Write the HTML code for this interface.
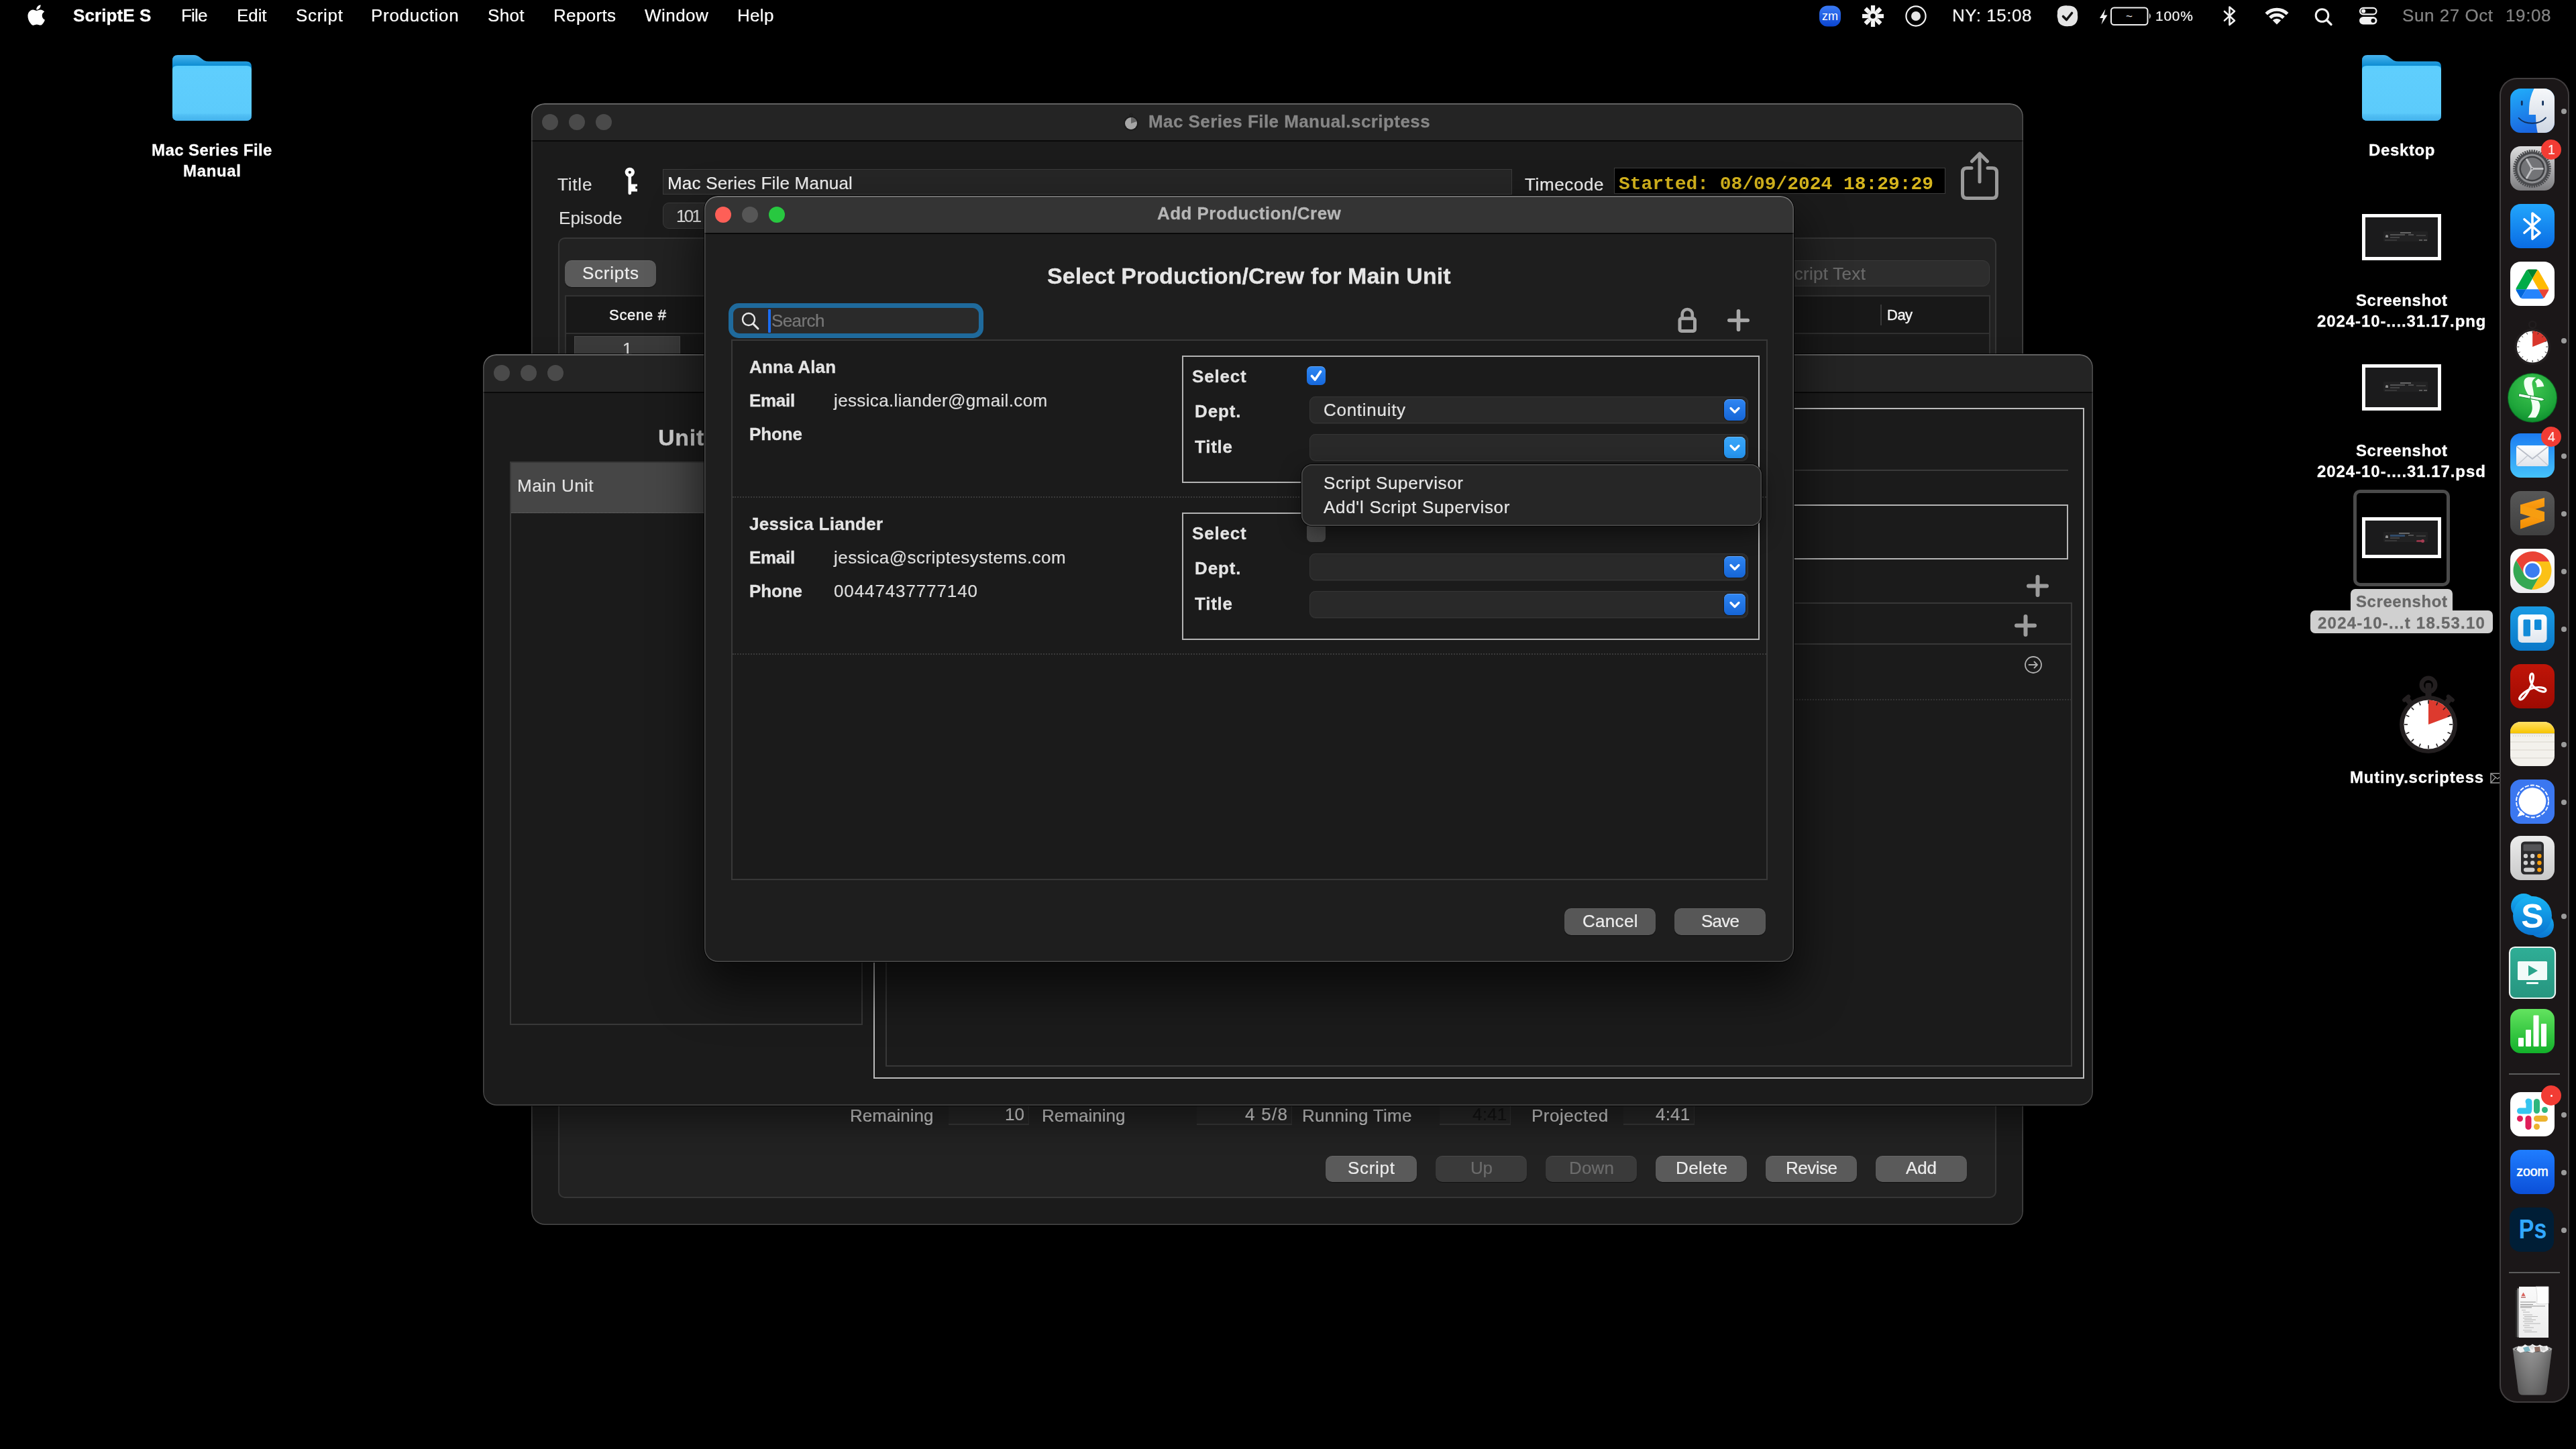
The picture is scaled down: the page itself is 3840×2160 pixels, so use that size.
<!DOCTYPE html>
<html lang="en"><head><meta charset="utf-8"><title>ScriptE S - Add Production/Crew</title><style>
html,body{margin:0;padding:0;background:#000;}
body{width:3840px;height:2160px;position:relative;overflow:hidden;font-family:"Liberation Sans",sans-serif;}
.t{position:absolute;white-space:pre;line-height:0;height:0;display:block;will-change:transform;}
.win{position:absolute;border-radius:20px;overflow:hidden;box-shadow:0 0 0 1px rgba(0,0,0,.9);}
.win:after{content:"";position:absolute;left:0;top:0;right:0;bottom:0;border-radius:20px;box-shadow:inset 0 0 0 1.5px rgba(255,255,255,.2), inset 0 2px 0 0 rgba(255,255,255,.17);pointer-events:none;}
.tb{position:absolute;left:0;top:0;right:0;border-bottom:2px solid #090909;box-sizing:border-box;}
</style></head>
<body>
<svg style="position:absolute;left:257px;top:82px" width="118" height="98" viewBox="0 0 118 98">
<defs><linearGradient id="fb257" x1="0" y1="0" x2="0" y2="1"><stop offset="0" stop-color="#48b4ee"/><stop offset="0.17" stop-color="#0a8bd2"/><stop offset="1" stop-color="#2f9be2"/></linearGradient>
<linearGradient id="ff257" x1="0" y1="0" x2="0" y2="1"><stop offset="0" stop-color="#58cdff"/><stop offset="0.1" stop-color="#5fcefd"/><stop offset="0.86" stop-color="#5ccbfb"/><stop offset="0.9" stop-color="#50bff4"/><stop offset="1" stop-color="#44b2ec"/></linearGradient></defs>
<path d="M0 8 Q0 0 8 0 L32 0 Q37 0 41 3.5 L47 8 Q50 9.5 54 9.5 L110 9.5 Q118 9.5 118 17.5 L118 90 Q118 98 110 98 L8 98 Q0 98 0 90 Z" fill="url(#fb257)"/>
<path d="M0 22 Q0 16 7 16 L111 16 Q118 16 118 22 L118 90 Q118 98 110 98 L8 98 Q0 98 0 90 Z" fill="url(#ff257)"/>
</svg>
<span class="t" style="left:226.00px;top:223.68px;font-size:24px;color:#fff;font-weight:700;letter-spacing:0.429px;-webkit-text-stroke:0.3px #fff;">Mac Series File</span>
<span class="t" style="left:273.00px;top:255.43px;font-size:24px;color:#fff;font-weight:700;letter-spacing:0.650px;-webkit-text-stroke:0.3px #fff;">Manual</span>
<svg style="position:absolute;left:3521px;top:82px" width="118" height="98" viewBox="0 0 118 98">
<defs><linearGradient id="fb3521" x1="0" y1="0" x2="0" y2="1"><stop offset="0" stop-color="#48b4ee"/><stop offset="0.17" stop-color="#0a8bd2"/><stop offset="1" stop-color="#2f9be2"/></linearGradient>
<linearGradient id="ff3521" x1="0" y1="0" x2="0" y2="1"><stop offset="0" stop-color="#58cdff"/><stop offset="0.1" stop-color="#5fcefd"/><stop offset="0.86" stop-color="#5ccbfb"/><stop offset="0.9" stop-color="#50bff4"/><stop offset="1" stop-color="#44b2ec"/></linearGradient></defs>
<path d="M0 8 Q0 0 8 0 L32 0 Q37 0 41 3.5 L47 8 Q50 9.5 54 9.5 L110 9.5 Q118 9.5 118 17.5 L118 90 Q118 98 110 98 L8 98 Q0 98 0 90 Z" fill="url(#fb3521)"/>
<path d="M0 22 Q0 16 7 16 L111 16 Q118 16 118 22 L118 90 Q118 98 110 98 L8 98 Q0 98 0 90 Z" fill="url(#ff3521)"/>
</svg>
<span class="t" style="left:3530.50px;top:223.68px;font-size:24px;color:#fff;font-weight:700;letter-spacing:0.625px;-webkit-text-stroke:0.3px #fff;">Desktop</span>
<div style="position:absolute;left:3521px;top:319px;width:118px;height:69px;background:#fff;"><div style="position:absolute;left:5px;top:5px;width:108px;height:59px;background:#1b1b1c;overflow:hidden;"><div style="position:absolute;left:0;top:0.0px;opacity:.7"><div style="position:absolute;left:27px;top:21px;width:66px;height:15px;background:#262626;border-radius:1px"></div><div style="position:absolute;left:30px;top:26px;width:4px;height:4px;background:#bbb;border-radius:2px 2px 0 0"></div><div style="position:absolute;left:37px;top:25px;width:22px;height:2px;background:#6a6a6a"></div><div style="position:absolute;left:37px;top:29px;width:14px;height:2px;background:#555"></div><div style="position:absolute;left:64px;top:25px;width:8px;height:2px;background:#666"></div><div style="position:absolute;left:76px;top:26px;width:14px;height:2px;background:#4a4a4a"></div><div style="position:absolute;left:29px;top:33px;width:18px;height:1.5px;background:#444"></div><div style="position:absolute;left:52px;top:22px;width:16px;height:1.5px;background:#888"></div><div style="position:absolute;left:80px;top:33px;width:5px;height:2px;background:#777"></div><div style="position:absolute;left:87px;top:33px;width:5px;height:2px;background:#777"></div></div></div></div>
<span class="t" style="left:3512.00px;top:447.68px;font-size:24px;color:#fff;font-weight:700;letter-spacing:0.583px;-webkit-text-stroke:0.3px #fff;">Screenshot</span>
<span class="t" style="left:3454.00px;top:479.18px;font-size:24px;color:#fff;font-weight:700;letter-spacing:0.900px;-webkit-text-stroke:0.3px #fff;">2024-10-....31.17.png</span>
<div style="position:absolute;left:3521px;top:543px;width:118px;height:69px;background:#fff;"><div style="position:absolute;left:5px;top:5px;width:108px;height:59px;background:#1b1b1c;overflow:hidden;"><div style="position:absolute;left:0;top:0.0px;opacity:.7"><div style="position:absolute;left:27px;top:21px;width:66px;height:15px;background:#262626;border-radius:1px"></div><div style="position:absolute;left:30px;top:26px;width:4px;height:4px;background:#bbb;border-radius:2px 2px 0 0"></div><div style="position:absolute;left:37px;top:25px;width:22px;height:2px;background:#6a6a6a"></div><div style="position:absolute;left:37px;top:29px;width:14px;height:2px;background:#555"></div><div style="position:absolute;left:64px;top:25px;width:8px;height:2px;background:#666"></div><div style="position:absolute;left:76px;top:26px;width:14px;height:2px;background:#4a4a4a"></div><div style="position:absolute;left:29px;top:33px;width:18px;height:1.5px;background:#444"></div><div style="position:absolute;left:52px;top:22px;width:16px;height:1.5px;background:#888"></div><div style="position:absolute;left:80px;top:33px;width:5px;height:2px;background:#777"></div><div style="position:absolute;left:87px;top:33px;width:5px;height:2px;background:#777"></div></div></div></div>
<span class="t" style="left:3512.00px;top:671.68px;font-size:24px;color:#fff;font-weight:700;letter-spacing:0.583px;-webkit-text-stroke:0.3px #fff;">Screenshot</span>
<span class="t" style="left:3454.00px;top:703.43px;font-size:24px;color:#fff;font-weight:700;letter-spacing:0.938px;-webkit-text-stroke:0.3px #fff;">2024-10-....31.17.psd</span>
<div style="position:absolute;left:3508px;top:730px;width:144px;height:144px;border:5px solid #4b4b4b;border-radius:10px;box-sizing:border-box;background:#000;"></div>
<div style="position:absolute;left:3521px;top:771px;width:118px;height:61px;background:#fff;"><div style="position:absolute;left:5px;top:5px;width:108px;height:51px;background:#1b1b1c;overflow:hidden;"><div style="position:absolute;left:0;top:-4.0px;opacity:.7"><div style="position:absolute;left:27px;top:21px;width:66px;height:15px;background:#262626;border-radius:1px"></div><div style="position:absolute;left:30px;top:26px;width:4px;height:4px;background:#bbb;border-radius:2px 2px 0 0"></div><div style="position:absolute;left:37px;top:25px;width:22px;height:2px;background:#6a6a6a"></div><div style="position:absolute;left:37px;top:29px;width:14px;height:2px;background:#555"></div><div style="position:absolute;left:64px;top:25px;width:8px;height:2px;background:#666"></div><div style="position:absolute;left:76px;top:26px;width:14px;height:2px;background:#4a4a4a"></div><div style="position:absolute;left:29px;top:33px;width:18px;height:1.5px;background:#444"></div><div style="position:absolute;left:50px;top:22px;width:16px;height:1.5px;background:#888"></div><div style="position:absolute;left:37px;top:25px;width:22px;height:3px;background:#3a5f8a"></div><div style="position:absolute;left:76px;top:33px;width:9px;height:3px;background:#c0405a;border-radius:1.5px"></div><div style="position:absolute;left:83px;top:32px;width:5px;height:5px;background:#e04a6a;border-radius:3px"></div></div></div></div>
<div style="position:absolute;left:3504px;top:878px;width:152px;height:33px;background:#d0d0d0;border-radius:7px 7px 0 0;"></div>
<div style="position:absolute;left:3444px;top:910px;width:272px;height:34px;background:#d0d0d0;border-radius:7px;"></div>
<span class="t" style="left:3512.00px;top:896.68px;font-size:24px;color:#686868;font-weight:700;letter-spacing:0.583px;-webkit-text-stroke:0.3px #686868;">Screenshot</span>
<span class="t" style="left:3455.00px;top:928.68px;font-size:24px;color:#686868;font-weight:700;letter-spacing:1.238px;-webkit-text-stroke:0.3px #686868;">2024-10-...t 18.53.10</span>
<svg style="position:absolute;left:3570px;top:1004px" width="100" height="124" viewBox="-50 -76 100 124"><circle cx="0" cy="-59" r="10.2" fill="none" stroke="#231f20" stroke-width="6.5"/><rect x="-4.5" y="-62" width="9" height="24" rx="3" fill="#231f20"/><g transform="rotate(-40)"><rect x="-4" y="-51" width="8" height="10" fill="#231f20"/><rect x="-7" y="-54" width="14" height="6" rx="3" fill="#231f20"/></g><g transform="rotate(40)"><rect x="-4" y="-51" width="8" height="10" fill="#231f20"/><rect x="-7" y="-54" width="14" height="6" rx="3" fill="#231f20"/></g><circle cx="0" cy="0" r="43" fill="#231f20"/><circle cx="0" cy="0" r="36.5" fill="#fff"/><path d="M0 0 L0 -36.5 A36.5 36.5 0 0 1 34.19 -12.78 Z" fill="#dd3a2e"/><line x1="0.00" y1="-31.00" x2="0.00" y2="-36.00" stroke="#231f20" stroke-width="1.6"/><line x1="11.86" y1="-28.64" x2="13.78" y2="-33.26" stroke="#231f20" stroke-width="1.6"/><line x1="21.92" y1="-21.92" x2="25.46" y2="-25.46" stroke="#231f20" stroke-width="1.6"/><line x1="28.64" y1="-11.86" x2="33.26" y2="-13.78" stroke="#231f20" stroke-width="1.6"/><line x1="31.00" y1="-0.00" x2="36.00" y2="-0.00" stroke="#231f20" stroke-width="1.6"/><line x1="28.64" y1="11.86" x2="33.26" y2="13.78" stroke="#231f20" stroke-width="1.6"/><line x1="21.92" y1="21.92" x2="25.46" y2="25.46" stroke="#231f20" stroke-width="1.6"/><line x1="11.86" y1="28.64" x2="13.78" y2="33.26" stroke="#231f20" stroke-width="1.6"/><line x1="0.00" y1="31.00" x2="0.00" y2="36.00" stroke="#231f20" stroke-width="1.6"/><line x1="-11.86" y1="28.64" x2="-13.78" y2="33.26" stroke="#231f20" stroke-width="1.6"/><line x1="-21.92" y1="21.92" x2="-25.46" y2="25.46" stroke="#231f20" stroke-width="1.6"/><line x1="-28.64" y1="11.86" x2="-33.26" y2="13.78" stroke="#231f20" stroke-width="1.6"/><line x1="-31.00" y1="0.00" x2="-36.00" y2="0.00" stroke="#231f20" stroke-width="1.6"/><line x1="-28.64" y1="-11.86" x2="-33.26" y2="-13.78" stroke="#231f20" stroke-width="1.6"/><line x1="-21.92" y1="-21.92" x2="-25.46" y2="-25.46" stroke="#231f20" stroke-width="1.6"/><line x1="-11.86" y1="-28.64" x2="-13.78" y2="-33.26" stroke="#231f20" stroke-width="1.6"/></svg>
<span class="t" style="left:3503.00px;top:1159.18px;font-size:24px;color:#fff;font-weight:700;letter-spacing:0.767px;-webkit-text-stroke:0.3px #fff;">Mutiny.scriptess</span>
<svg style="position:absolute;left:3712px;top:1152px" width="22" height="16" viewBox="0 0 22 16"><rect x="1" y="1" width="20" height="14" fill="none" stroke="#999" stroke-width="1.5"/><path d="M1 1 L11 9 L21 1 M1 15 L8 7 M21 15 L14 7" fill="none" stroke="#999" stroke-width="1.3"/></svg>
<div class="win" style="left:792px;top:154px;width:2224px;height:1672px;background:#1b1b1b;">
<div class="tb" style="height:57px;background:#242424;"></div>
</div>
<div style="position:absolute;left:808px;top:170px;width:24px;height:24px;border-radius:12px;background:#4a4a4a;"></div><div style="position:absolute;left:848px;top:170px;width:24px;height:24px;border-radius:12px;background:#4a4a4a;"></div><div style="position:absolute;left:888px;top:170px;width:24px;height:24px;border-radius:12px;background:#4a4a4a;"></div>
<svg style="position:absolute;left:1674px;top:168px" width="24" height="30" viewBox="-12 -16 24 30"><circle r="10.800" fill="#1b1b1b"/><circle r="9" fill="#a6a6a6"/><path d="M0 0 L0 -9 A9 9 0 0 1 8.460 -3.080 Z" fill="#656565"/><circle cx="0" cy="-12.500" r="2" fill="none" stroke="#1d1d1d" stroke-width="1.200"/></svg>
<span class="t" style="left:1711.90px;top:180.79px;font-size:26px;color:#868686;font-weight:700;letter-spacing:0.439px;-webkit-text-stroke:0.3px #868686;">Mac Series File Manual.scriptess</span>
<span class="t" style="left:831.00px;top:274.74px;font-size:26px;color:#dedede;letter-spacing:0.812px;-webkit-text-stroke:0.22px #dedede;">Title</span>
<svg style="position:absolute;left:928px;top:246px" width="28" height="48" viewBox="928 246 28 48"><circle cx="938.800" cy="256.800" r="4.650" fill="none" stroke="#fff" stroke-width="5"/><rect x="936.500" y="261" width="4.600" height="29.300" rx="2.300" fill="#fff"/><path d="M940 274.400 L950 274.400 L950 277.700 L947.300 277.700 L947.300 281.400 L950 281.400 L950 285.600 L940 285.600 Z" fill="#fff"/></svg>
<div style="position:absolute;left:988px;top:252px;width:1266px;height:38px;background:#262626;border:1px solid #3c3c3c;box-sizing:border-box;"></div>
<span class="t" style="left:995.00px;top:272.99px;font-size:26px;color:#f0f0f0;letter-spacing:0.202px;-webkit-text-stroke:0.22px #f0f0f0;">Mac Series File Manual</span>
<span class="t" style="left:2273.00px;top:274.89px;font-size:26px;color:#f0f0f0;letter-spacing:0.621px;-webkit-text-stroke:0.22px #f0f0f0;">Timecode</span>
<div style="position:absolute;left:2406px;top:250px;width:494px;height:39px;background:#000;border:1.5px solid #3d3d3d;box-sizing:border-box;"></div>
<span class="t" style="left:2413.00px;top:274.84px;font-size:28px;color:#d6b51d;font-weight:700;font-family:'Liberation Mono', monospace;letter-spacing:-0.056px;">Started: 08/09/2024 18:29:29</span>
<svg style="position:absolute;left:2915px;top:220px" width="72" height="84" viewBox="2915 220 72 84"><path d="M2939 250.5 L2932 250.5 Q2925.5 250.5 2925.5 257 L2925.5 289 Q2925.5 295.5 2932 295.5 L2970 295.5 Q2976.500 295.5 2976.500 289 L2976.500 257 Q2976.500 250.500 2970 250.500 L2963 250.500" fill="none" stroke="#9a9a9a" stroke-width="5" stroke-linecap="round"/><path d="M2951 271 L2951 230 M2939.5 240.500 L2951 229 L2962.500 240.500" fill="none" stroke="#9a9a9a" stroke-width="5" stroke-linecap="round" stroke-linejoin="round"/></svg>
<span class="t" style="left:833.00px;top:324.74px;font-size:26px;color:#dedede;letter-spacing:0.083px;-webkit-text-stroke:0.22px #dedede;">Episode</span>
<div style="position:absolute;left:988px;top:302px;width:200px;height:39px;background:#272727;border:1px solid #3a3a3a;border-radius:9px;box-sizing:border-box;"></div>
<span class="t" style="left:1008.00px;top:322.49px;font-size:26px;color:#dedede;letter-spacing:-2.750px;-webkit-text-stroke:0.22px #dedede;">101</span>
<div style="position:absolute;left:832px;top:354px;width:2144px;height:1432px;background:#222;border:2px solid #363636;border-radius:10px;box-sizing:border-box;"></div>
<div style="position:absolute;left:842px;top:388px;width:136px;height:40px;background:#5a5a5a;border-radius:10px;box-shadow:0 1px 1px rgba(0,0,0,.5), inset 0 1px 0 rgba(255,255,255,.08);"></div><span class="t" style="left:868.00px;top:406.99px;font-size:26px;color:#ececec;letter-spacing:0.750px;-webkit-text-stroke:0.22px #ececec;">Scripts</span>
<div style="position:absolute;left:2560px;top:388px;width:406px;height:39px;background:#2d2d2d;border:1px solid #3a3a3a;border-radius:10px;box-sizing:border-box;"></div>
<span class="t" style="left:2657.00px;top:408.39px;font-size:26px;color:#6a6a6a;letter-spacing:0.300px;-webkit-text-stroke:0.22px #6a6a6a;">Script Text</span>
<div style="position:absolute;left:842px;top:440px;width:2125px;height:1200px;background:#1a1a1a;border:2px solid #323232;box-sizing:border-box;"></div>
<div style="position:absolute;left:844px;top:442px;width:2121px;height:56px;background:#181818;border-bottom:2px solid #303030;box-sizing:border-box;"></div>
<span class="t" style="left:907.50px;top:469.88px;font-size:22px;color:#f4f4f4;letter-spacing:0.708px;-webkit-text-stroke:0.45px #f4f4f4;">Scene #</span>
<div style="position:absolute;left:2803px;top:454px;width:1.5px;height:31px;background:#3a3a3a;"></div>
<span class="t" style="left:2812.80px;top:469.88px;font-size:22px;color:#f4f4f4;letter-spacing:-0.500px;-webkit-text-stroke:0.45px #f4f4f4;">Day</span>
<div style="position:absolute;left:856px;top:501px;width:158px;height:40px;background:#3b3b3b;border:1px solid #4a4a4a;box-sizing:border-box;"></div>
<span class="t" style="left:927.75px;top:519.99px;font-size:26px;color:#dedede;-webkit-text-stroke:0.22px #dedede;">1</span>
<span class="t" style="left:1266.50px;top:1663.49px;font-size:26px;color:#cfcfcf;letter-spacing:0.031px;-webkit-text-stroke:0.22px #cfcfcf;">Remaining</span>
<div style="position:absolute;left:1414px;top:1636px;width:120px;height:41px;background:#262626;border-bottom:2px solid #383838;border-right:1.5px solid #333;box-sizing:border-box;"></div>
<span class="t" style="left:1497.50px;top:1661.49px;font-size:26px;color:#d8d8d8;-webkit-text-stroke:0.22px #d8d8d8;">10</span>
<span class="t" style="left:1552.50px;top:1663.49px;font-size:26px;color:#cfcfcf;letter-spacing:0.031px;-webkit-text-stroke:0.22px #cfcfcf;">Remaining</span>
<div style="position:absolute;left:1784px;top:1636px;width:142px;height:41px;background:#262626;border-bottom:2px solid #383838;border-right:1.5px solid #333;box-sizing:border-box;"></div>
<span class="t" style="left:1856.00px;top:1661.49px;font-size:26px;color:#d8d8d8;letter-spacing:1.312px;-webkit-text-stroke:0.22px #d8d8d8;">4 5/8</span>
<span class="t" style="left:1941.00px;top:1663.49px;font-size:26px;color:#cfcfcf;letter-spacing:0.273px;-webkit-text-stroke:0.22px #cfcfcf;">Running Time</span>
<div style="position:absolute;left:2146px;top:1636px;width:106px;height:41px;background:#262626;border-bottom:2px solid #383838;border-right:1.5px solid #333;box-sizing:border-box;"></div>
<span class="t" style="left:2195.00px;top:1661.49px;font-size:26px;color:#141414;letter-spacing:0.167px;-webkit-text-stroke:0.22px #141414;">4:41</span>
<span class="t" style="left:2282.50px;top:1663.49px;font-size:26px;color:#cfcfcf;letter-spacing:0.531px;-webkit-text-stroke:0.22px #cfcfcf;">Projected</span>
<div style="position:absolute;left:2420px;top:1636px;width:106px;height:41px;background:#262626;border-bottom:2px solid #383838;border-right:1.5px solid #333;box-sizing:border-box;"></div>
<span class="t" style="left:2468.00px;top:1661.49px;font-size:26px;color:#d8d8d8;letter-spacing:0.167px;-webkit-text-stroke:0.22px #d8d8d8;">4:41</span>
<div style="position:absolute;left:1976px;top:1722.5px;width:136px;height:39px;background:#5a5a5a;border-radius:10px;box-shadow:0 1px 1px rgba(0,0,0,.5), inset 0 1px 0 rgba(255,255,255,.08);"></div><span class="t" style="left:2009.00px;top:1740.99px;font-size:26px;color:#ececec;letter-spacing:0.700px;-webkit-text-stroke:0.22px #ececec;">Script</span>
<div style="position:absolute;left:2140px;top:1722.5px;width:136px;height:39px;background:#3a3a3a;border-radius:10px;box-shadow:0 1px 1px rgba(0,0,0,.5), inset 0 1px 0 rgba(255,255,255,.08);"></div><span class="t" style="left:2191.50px;top:1740.99px;font-size:26px;color:#6c6c6c;letter-spacing:-0.250px;-webkit-text-stroke:0.22px #6c6c6c;">Up</span>
<div style="position:absolute;left:2304px;top:1722.5px;width:136px;height:39px;background:#3a3a3a;border-radius:10px;box-shadow:0 1px 1px rgba(0,0,0,.5), inset 0 1px 0 rgba(255,255,255,.08);"></div><span class="t" style="left:2338.50px;top:1740.99px;font-size:26px;color:#6c6c6c;letter-spacing:0.167px;-webkit-text-stroke:0.22px #6c6c6c;">Down</span>
<div style="position:absolute;left:2468px;top:1722.5px;width:136px;height:39px;background:#5a5a5a;border-radius:10px;box-shadow:0 1px 1px rgba(0,0,0,.5), inset 0 1px 0 rgba(255,255,255,.08);"></div><span class="t" style="left:2497.50px;top:1740.99px;font-size:26px;color:#ececec;letter-spacing:0.350px;-webkit-text-stroke:0.22px #ececec;">Delete</span>
<div style="position:absolute;left:2632px;top:1722.5px;width:136px;height:39px;background:#5a5a5a;border-radius:10px;box-shadow:0 1px 1px rgba(0,0,0,.5), inset 0 1px 0 rgba(255,255,255,.08);"></div><span class="t" style="left:2661.50px;top:1740.99px;font-size:26px;color:#ececec;letter-spacing:-0.500px;-webkit-text-stroke:0.22px #ececec;">Revise</span>
<div style="position:absolute;left:2796px;top:1722.5px;width:136px;height:39px;background:#5a5a5a;border-radius:10px;box-shadow:0 1px 1px rgba(0,0,0,.5), inset 0 1px 0 rgba(255,255,255,.08);"></div><span class="t" style="left:2841.00px;top:1740.99px;font-size:26px;color:#ececec;letter-spacing:-0.125px;-webkit-text-stroke:0.22px #ececec;">Add</span>
<div class="win" style="left:720px;top:528px;width:2400px;height:1120px;background:#1b1b1b;box-shadow:0 0 0 1px rgba(0,0,0,.9), 0 24px 46px rgba(0,0,0,.42);">
<div class="tb" style="height:58px;background:#242424;"></div>
</div>
<div style="position:absolute;left:736px;top:544px;width:24px;height:24px;border-radius:12px;background:#4a4a4a;"></div><div style="position:absolute;left:776px;top:544px;width:24px;height:24px;border-radius:12px;background:#4a4a4a;"></div><div style="position:absolute;left:816px;top:544px;width:24px;height:24px;border-radius:12px;background:#4a4a4a;"></div>
<span class="t" style="left:980.50px;top:651.97px;font-size:34px;color:#cfcfcf;font-weight:700;letter-spacing:0.750px;-webkit-text-stroke:0.3px #cfcfcf;">Units</span>
<div style="position:absolute;left:760px;top:688px;width:526px;height:840px;background:#1b1b1b;border:2px solid #383838;box-sizing:border-box;"></div>
<div style="position:absolute;left:762px;top:690px;width:523px;height:75px;background:#464646;border-bottom:1.5px dotted #6a6a6a;box-sizing:border-box;"></div>
<span class="t" style="left:770.75px;top:723.99px;font-size:26px;color:#e2e2e2;letter-spacing:0.469px;-webkit-text-stroke:0.22px #e2e2e2;">Main Unit</span>
<div style="position:absolute;left:1302px;top:608px;width:1805px;height:1000px;border:2px solid #bcbcbc;box-sizing:border-box;background:#1b1b1b;"></div>
<div style="position:absolute;left:1327px;top:699.5px;width:1756px;height:2px;background:#3a3a3a;"></div>
<div style="position:absolute;left:1327px;top:752px;width:1756px;height:82px;border:2px solid #b6b6b6;box-sizing:border-box;"></div>
<svg style="position:absolute;left:3018.0px;top:853.5px" width="39.0" height="39.0" viewBox="-19.5 -19.5 39.0 39.0"><path d="M-13.5 0 L13.5 0 M0 -13.5 L0 13.5" stroke="#9c9c9c" stroke-width="6" stroke-linecap="round"/></svg>
<div style="position:absolute;left:1320px;top:898px;width:1769px;height:692px;border:2px solid #383838;box-sizing:border-box;"></div>
<svg style="position:absolute;left:2999.5px;top:913.0px" width="39.0" height="39.0" viewBox="-19.5 -19.5 39.0 39.0"><path d="M-13.5 0 L13.5 0 M0 -13.5 L0 13.5" stroke="#9c9c9c" stroke-width="6" stroke-linecap="round"/></svg>
<div style="position:absolute;left:1321px;top:958.5px;width:1767px;height:2px;background:#383838;"></div>
<svg style="position:absolute;left:3015px;top:975px" width="32" height="32" viewBox="-16 -16 32 32"><circle r="12" fill="none" stroke="#b0b0b0" stroke-width="1.8"/><path d="M-6.500 0 L6 0 M1.500 -4.500 L6 0 L1.500 4.500" fill="none" stroke="#b0b0b0" stroke-width="1.8" stroke-linecap="round" stroke-linejoin="round"/></svg>
<div style="position:absolute;left:1321px;top:1042px;width:1767px;height:0px;border-top:2px dotted #343434;"></div>
<div class="win" style="left:1050px;top:292px;width:1624px;height:1142px;background:#1e1e1e;box-shadow:0 0 0 1px rgba(0,0,0,.9), 0 36px 70px 6px rgba(0,0,0,.62);">
<div class="tb" style="height:57px;background:#343434;"></div>
</div>
<div style="position:absolute;left:1066px;top:308px;width:24px;height:24px;border-radius:12px;background:#fe5f57;"></div><div style="position:absolute;left:1106px;top:308px;width:24px;height:24px;border-radius:12px;background:#565656;"></div><div style="position:absolute;left:1146px;top:308px;width:24px;height:24px;border-radius:12px;background:#28c840;"></div>
<span class="t" style="left:1725.00px;top:318.49px;font-size:26px;color:#b6b6b6;font-weight:700;letter-spacing:0.444px;-webkit-text-stroke:0.3px #b6b6b6;">Add Production/Crew</span>
<span class="t" style="left:1561.00px;top:410.72px;font-size:34px;color:#e6e6e6;font-weight:700;letter-spacing:0.079px;-webkit-text-stroke:0.3px #e6e6e6;">Select Production/Crew for Main Unit</span>
<div style="position:absolute;left:1086px;top:452px;width:380px;height:52px;border-radius:15px;background:#1f6a9c;"></div>
<div style="position:absolute;left:1093px;top:459px;width:366px;height:38px;border-radius:9px;background:#2a2a2a;"></div>
<svg style="position:absolute;left:1102px;top:462px" width="34" height="34" viewBox="1102 462 34 34"><circle cx="1116" cy="476" r="9" fill="none" stroke="#e8e8e8" stroke-width="2.4"/><path d="M1122.600 482.600 L1130 490" stroke="#e8e8e8" stroke-width="3" stroke-linecap="round"/></svg>
<span class="t" style="left:1149.50px;top:478.49px;font-size:26px;color:#777;letter-spacing:-0.600px;-webkit-text-stroke:0.22px #777;">Search</span>
<div style="position:absolute;left:1145px;top:460.5px;width:4px;height:35px;background:#1b6df2;border-radius:1px;"></div>
<svg style="position:absolute;left:2496px;top:454px" width="40" height="46" viewBox="2496 454 40 46"><rect x="2504" y="474.700" width="22.500" height="18.800" rx="2.500" fill="none" stroke="#a4a4a4" stroke-width="5"/><path d="M2507.700 474 L2507.700 468.500 A7.550 7.550 0 0 1 2522.800 468.500 L2522.800 474" fill="none" stroke="#a4a4a4" stroke-width="4.6"/></svg>
<svg style="position:absolute;left:2572.0px;top:458.2px" width="39.0" height="39.0" viewBox="-19.5 -19.5 39.0 39.0"><path d="M-13.7 0 L13.7 0 M0 -13.7 L0 13.7" stroke="#a8a8a8" stroke-width="5.6" stroke-linecap="round"/></svg>
<div style="position:absolute;left:1090px;top:506px;width:1545px;height:806px;background:#1b1b1b;border:2px solid #383838;box-sizing:border-box;"></div>
<div style="position:absolute;left:1092px;top:740px;width:1541px;height:0px;border-top:2px dotted #3a3a3a;"></div>
<div style="position:absolute;left:1092px;top:973.5px;width:1541px;height:0px;border-top:2px dotted #3a3a3a;"></div>
<span class="t" style="left:1117.00px;top:546.74px;font-size:26px;color:#e4e4e4;font-weight:700;letter-spacing:0.188px;-webkit-text-stroke:0.3px #e4e4e4;">Anna Alan</span>
<span class="t" style="left:1117.00px;top:596.74px;font-size:26px;color:#e4e4e4;font-weight:700;letter-spacing:-0.312px;-webkit-text-stroke:0.3px #e4e4e4;">Email</span>
<span class="t" style="left:1243.25px;top:596.74px;font-size:26px;color:#dedede;letter-spacing:0.354px;-webkit-text-stroke:0.22px #dedede;">jessica.liander@gmail.com</span>
<span class="t" style="left:1117.00px;top:646.74px;font-size:26px;color:#e4e4e4;font-weight:700;letter-spacing:-0.125px;-webkit-text-stroke:0.3px #e4e4e4;">Phone</span>
<div style="position:absolute;left:1762px;top:530px;width:861px;height:190px;border:2px solid #b4b4b4;box-sizing:border-box;"></div>
<span class="t" style="left:1776.75px;top:561.49px;font-size:26px;color:#e4e4e4;font-weight:700;letter-spacing:0.800px;-webkit-text-stroke:0.3px #e4e4e4;">Select</span>
<div style="position:absolute;left:1948px;top:546px;width:28px;height:28px;border-radius:7px;background:linear-gradient(#2e88f4,#1668dc);box-shadow:inset 0 1px 0 rgba(255,255,255,.25);"><svg width="28" height="28" viewBox="0 0 28 28" style="position:absolute;left:0;top:0"><path d="M7.500 14.500 L12.300 20 L20.500 8" fill="none" stroke="#fff" stroke-width="3.6" stroke-linecap="round" stroke-linejoin="round"/></svg></div>
<span class="t" style="left:1780.75px;top:612.74px;font-size:26px;color:#e4e4e4;font-weight:700;letter-spacing:0.875px;-webkit-text-stroke:0.3px #e4e4e4;">Dept.</span>
<div style="position:absolute;left:1952px;top:591px;width:653.5px;height:39.5px;background:#292929;border-radius:9px;box-shadow:inset 0 0 0 1px #353535, 0 1px 0 rgba(255,255,255,.06);"></div><span class="t" style="left:1972.50px;top:611.49px;font-size:26px;color:#e2e2e2;letter-spacing:0.722px;-webkit-text-stroke:0.22px #e2e2e2;">Continuity</span><div style="position:absolute;left:2570.0px;top:595px;width:32px;height:32px;border-radius:7.5px;background:linear-gradient(#2f86f3,#1565d6);box-shadow:0 0 0 1px rgba(0,0,0,.35), inset 0 1px 0 rgba(255,255,255,.25);"><svg width="32" height="32" viewBox="0 0 32 32" style="position:absolute;left:0;top:0"><path d="M10 13.500 L16 19.500 L22 13.500" fill="none" stroke="#fff" stroke-width="3.2" stroke-linecap="round" stroke-linejoin="round"/></svg></div>
<span class="t" style="left:1781.00px;top:666.49px;font-size:26px;color:#e4e4e4;font-weight:700;letter-spacing:0.750px;-webkit-text-stroke:0.3px #e4e4e4;">Title</span>
<div style="position:absolute;left:1952px;top:647px;width:653.5px;height:39.5px;background:#292929;border-radius:9px;box-shadow:inset 0 0 0 1px #353535, 0 1px 0 rgba(255,255,255,.06);"></div><div style="position:absolute;left:2570.0px;top:651px;width:32px;height:32px;border-radius:7.5px;background:linear-gradient(#3aa6f8,#2494f0);box-shadow:0 0 0 1px rgba(0,0,0,.35), inset 0 1px 0 rgba(255,255,255,.25);"><svg width="32" height="32" viewBox="0 0 32 32" style="position:absolute;left:0;top:0"><path d="M10 13.500 L16 19.500 L22 13.500" fill="none" stroke="#fff" stroke-width="3.2" stroke-linecap="round" stroke-linejoin="round"/></svg></div>
<span class="t" style="left:1117.00px;top:780.74px;font-size:26px;color:#e4e4e4;font-weight:700;letter-spacing:0.286px;-webkit-text-stroke:0.3px #e4e4e4;">Jessica Liander</span>
<span class="t" style="left:1117.00px;top:830.74px;font-size:26px;color:#e4e4e4;font-weight:700;letter-spacing:-0.312px;-webkit-text-stroke:0.3px #e4e4e4;">Email</span>
<span class="t" style="left:1243.25px;top:830.74px;font-size:26px;color:#dedede;letter-spacing:0.460px;-webkit-text-stroke:0.22px #dedede;">jessica@scriptesystems.com</span>
<span class="t" style="left:1117.00px;top:880.74px;font-size:26px;color:#e4e4e4;font-weight:700;letter-spacing:-0.125px;-webkit-text-stroke:0.3px #e4e4e4;">Phone</span>
<span class="t" style="left:1243.00px;top:880.74px;font-size:26px;color:#dedede;letter-spacing:0.885px;-webkit-text-stroke:0.22px #dedede;">00447437777140</span>
<div style="position:absolute;left:1762px;top:764px;width:861px;height:190px;border:2px solid #b4b4b4;box-sizing:border-box;"></div>
<span class="t" style="left:1776.75px;top:795.49px;font-size:26px;color:#e4e4e4;font-weight:700;letter-spacing:0.800px;-webkit-text-stroke:0.3px #e4e4e4;">Select</span>
<div style="position:absolute;left:1948px;top:780px;width:28px;height:28px;border-radius:7px;background:linear-gradient(#525252,#474747);box-shadow:inset 0 1px 0 rgba(255,255,255,.15);"></div>
<span class="t" style="left:1780.75px;top:846.74px;font-size:26px;color:#e4e4e4;font-weight:700;letter-spacing:0.875px;-webkit-text-stroke:0.3px #e4e4e4;">Dept.</span>
<div style="position:absolute;left:1952px;top:825px;width:653.5px;height:39.5px;background:#292929;border-radius:9px;box-shadow:inset 0 0 0 1px #353535, 0 1px 0 rgba(255,255,255,.06);"></div><div style="position:absolute;left:2570.0px;top:829px;width:32px;height:32px;border-radius:7.5px;background:linear-gradient(#2f86f3,#1565d6);box-shadow:0 0 0 1px rgba(0,0,0,.35), inset 0 1px 0 rgba(255,255,255,.25);"><svg width="32" height="32" viewBox="0 0 32 32" style="position:absolute;left:0;top:0"><path d="M10 13.500 L16 19.500 L22 13.500" fill="none" stroke="#fff" stroke-width="3.2" stroke-linecap="round" stroke-linejoin="round"/></svg></div>
<span class="t" style="left:1781.00px;top:900.49px;font-size:26px;color:#e4e4e4;font-weight:700;letter-spacing:0.750px;-webkit-text-stroke:0.3px #e4e4e4;">Title</span>
<div style="position:absolute;left:1952px;top:881px;width:653.5px;height:39.5px;background:#292929;border-radius:9px;box-shadow:inset 0 0 0 1px #353535, 0 1px 0 rgba(255,255,255,.06);"></div><div style="position:absolute;left:2570.0px;top:885px;width:32px;height:32px;border-radius:7.5px;background:linear-gradient(#2f86f3,#1565d6);box-shadow:0 0 0 1px rgba(0,0,0,.35), inset 0 1px 0 rgba(255,255,255,.25);"><svg width="32" height="32" viewBox="0 0 32 32" style="position:absolute;left:0;top:0"><path d="M10 13.500 L16 19.500 L22 13.500" fill="none" stroke="#fff" stroke-width="3.2" stroke-linecap="round" stroke-linejoin="round"/></svg></div>
<div style="position:absolute;left:1940px;top:692px;width:685.5px;height:91.5px;border-radius:16px;background:#262626;box-shadow:inset 0 0 0 1.5px #4c4c4c, 0 0 0 1px rgba(0,0,0,.8), 0 10px 30px rgba(0,0,0,.5);"></div>
<span class="t" style="left:1972.50px;top:720.49px;font-size:26px;color:#e6e6e6;letter-spacing:0.625px;-webkit-text-stroke:0.22px #e6e6e6;">Script Supervisor</span>
<span class="t" style="left:1972.50px;top:756.49px;font-size:26px;color:#e6e6e6;letter-spacing:0.693px;-webkit-text-stroke:0.22px #e6e6e6;">Add&#x27;l Script Supervisor</span>
<div style="position:absolute;left:2332px;top:1354px;width:136px;height:40px;background:#575757;border-radius:10px;box-shadow:0 1px 1px rgba(0,0,0,.5), inset 0 1px 0 rgba(255,255,255,.08);"></div><span class="t" style="left:2358.75px;top:1372.99px;font-size:26px;color:#ececec;letter-spacing:0.300px;-webkit-text-stroke:0.22px #ececec;">Cancel</span>
<div style="position:absolute;left:2496px;top:1354px;width:136px;height:40px;background:#575757;border-radius:10px;box-shadow:0 1px 1px rgba(0,0,0,.5), inset 0 1px 0 rgba(255,255,255,.08);"></div><span class="t" style="left:2535.50px;top:1372.99px;font-size:26px;color:#ececec;letter-spacing:-0.750px;-webkit-text-stroke:0.22px #ececec;">Save</span>
<div style="position:absolute;left:3726px;top:116px;width:104px;height:1975px;background:#1b1718;border-radius:26px;box-shadow:inset 0 0 0 2px #403d3e;"></div>
<svg style="position:absolute;left:3742px;top:132px;overflow:visible" width="66" height="66" viewBox="0 0 66 66"><defs><linearGradient id="g1" x1="0" y1="0" x2="0.3" y2="1"><stop offset="0" stop-color="#21aefa"/><stop offset="1" stop-color="#1a67e0"/></linearGradient></defs><defs><linearGradient id="g1b" x1="0" y1="0" x2="0" y2="1"><stop offset="0" stop-color="#f6f8fa"/><stop offset="1" stop-color="#cfd7e3"/></linearGradient></defs><clipPath id="c1"><rect width="66" height="66" rx="15.5"/></clipPath><g clip-path="url(#c1)"><rect width="66" height="66" fill="url(#g1)"/><path d="M35.500 0 C31 9 28.500 18 28.100 28 L27.800 38.900 L38 38.900 C38 49 39 58 40.800 66 L66 66 L66 0 Z" fill="url(#g1b)"/><path d="M17.300 19.500 L17.300 24 M48.600 19.500 L48.600 24" stroke="#12305c" stroke-width="2.800" stroke-linecap="round"/><path d="M12.600 43.900 C22 54.500 44 54.500 53 43.400" fill="none" stroke="#12305c" stroke-width="1.900" stroke-linecap="round"/></g></svg>
<svg style="position:absolute;left:3742px;top:218px;overflow:visible" width="66" height="66" viewBox="0 0 66 66"><defs><linearGradient id="g2" x1="0" y1="0" x2="0" y2="1"><stop offset="0" stop-color="#dededf"/><stop offset="1" stop-color="#7c7c7f"/></linearGradient></defs><rect x="0" y="0" width="66" height="66" rx="15.5" fill="url(#g2)"/><g transform="translate(32.500,33.500)"><rect x="-1.100" y="-28.300" width="2.200" height="4" fill="#4a4b4e" transform="rotate(0.0)"/><rect x="-1.100" y="-28.300" width="2.200" height="4" fill="#4a4b4e" transform="rotate(7.5)"/><rect x="-1.100" y="-28.300" width="2.200" height="4" fill="#4a4b4e" transform="rotate(15.0)"/><rect x="-1.100" y="-28.300" width="2.200" height="4" fill="#4a4b4e" transform="rotate(22.5)"/><rect x="-1.100" y="-28.300" width="2.200" height="4" fill="#4a4b4e" transform="rotate(30.0)"/><rect x="-1.100" y="-28.300" width="2.200" height="4" fill="#4a4b4e" transform="rotate(37.5)"/><rect x="-1.100" y="-28.300" width="2.200" height="4" fill="#4a4b4e" transform="rotate(45.0)"/><rect x="-1.100" y="-28.300" width="2.200" height="4" fill="#4a4b4e" transform="rotate(52.5)"/><rect x="-1.100" y="-28.300" width="2.200" height="4" fill="#4a4b4e" transform="rotate(60.0)"/><rect x="-1.100" y="-28.300" width="2.200" height="4" fill="#4a4b4e" transform="rotate(67.5)"/><rect x="-1.100" y="-28.300" width="2.200" height="4" fill="#4a4b4e" transform="rotate(75.0)"/><rect x="-1.100" y="-28.300" width="2.200" height="4" fill="#4a4b4e" transform="rotate(82.5)"/><rect x="-1.100" y="-28.300" width="2.200" height="4" fill="#4a4b4e" transform="rotate(90.0)"/><rect x="-1.100" y="-28.300" width="2.200" height="4" fill="#4a4b4e" transform="rotate(97.5)"/><rect x="-1.100" y="-28.300" width="2.200" height="4" fill="#4a4b4e" transform="rotate(105.0)"/><rect x="-1.100" y="-28.300" width="2.200" height="4" fill="#4a4b4e" transform="rotate(112.5)"/><rect x="-1.100" y="-28.300" width="2.200" height="4" fill="#4a4b4e" transform="rotate(120.0)"/><rect x="-1.100" y="-28.300" width="2.200" height="4" fill="#4a4b4e" transform="rotate(127.5)"/><rect x="-1.100" y="-28.300" width="2.200" height="4" fill="#4a4b4e" transform="rotate(135.0)"/><rect x="-1.100" y="-28.300" width="2.200" height="4" fill="#4a4b4e" transform="rotate(142.5)"/><rect x="-1.100" y="-28.300" width="2.200" height="4" fill="#4a4b4e" transform="rotate(150.0)"/><rect x="-1.100" y="-28.300" width="2.200" height="4" fill="#4a4b4e" transform="rotate(157.5)"/><rect x="-1.100" y="-28.300" width="2.200" height="4" fill="#4a4b4e" transform="rotate(165.0)"/><rect x="-1.100" y="-28.300" width="2.200" height="4" fill="#4a4b4e" transform="rotate(172.5)"/><rect x="-1.100" y="-28.300" width="2.200" height="4" fill="#4a4b4e" transform="rotate(180.0)"/><rect x="-1.100" y="-28.300" width="2.200" height="4" fill="#4a4b4e" transform="rotate(187.5)"/><rect x="-1.100" y="-28.300" width="2.200" height="4" fill="#4a4b4e" transform="rotate(195.0)"/><rect x="-1.100" y="-28.300" width="2.200" height="4" fill="#4a4b4e" transform="rotate(202.5)"/><rect x="-1.100" y="-28.300" width="2.200" height="4" fill="#4a4b4e" transform="rotate(210.0)"/><rect x="-1.100" y="-28.300" width="2.200" height="4" fill="#4a4b4e" transform="rotate(217.5)"/><rect x="-1.100" y="-28.300" width="2.200" height="4" fill="#4a4b4e" transform="rotate(225.0)"/><rect x="-1.100" y="-28.300" width="2.200" height="4" fill="#4a4b4e" transform="rotate(232.5)"/><rect x="-1.100" y="-28.300" width="2.200" height="4" fill="#4a4b4e" transform="rotate(240.0)"/><rect x="-1.100" y="-28.300" width="2.200" height="4" fill="#4a4b4e" transform="rotate(247.5)"/><rect x="-1.100" y="-28.300" width="2.200" height="4" fill="#4a4b4e" transform="rotate(255.0)"/><rect x="-1.100" y="-28.300" width="2.200" height="4" fill="#4a4b4e" transform="rotate(262.5)"/><rect x="-1.100" y="-28.300" width="2.200" height="4" fill="#4a4b4e" transform="rotate(270.0)"/><rect x="-1.100" y="-28.300" width="2.200" height="4" fill="#4a4b4e" transform="rotate(277.5)"/><rect x="-1.100" y="-28.300" width="2.200" height="4" fill="#4a4b4e" transform="rotate(285.0)"/><rect x="-1.100" y="-28.300" width="2.200" height="4" fill="#4a4b4e" transform="rotate(292.5)"/><rect x="-1.100" y="-28.300" width="2.200" height="4" fill="#4a4b4e" transform="rotate(300.0)"/><rect x="-1.100" y="-28.300" width="2.200" height="4" fill="#4a4b4e" transform="rotate(307.5)"/><rect x="-1.100" y="-28.300" width="2.200" height="4" fill="#4a4b4e" transform="rotate(315.0)"/><rect x="-1.100" y="-28.300" width="2.200" height="4" fill="#4a4b4e" transform="rotate(322.5)"/><rect x="-1.100" y="-28.300" width="2.200" height="4" fill="#4a4b4e" transform="rotate(330.0)"/><rect x="-1.100" y="-28.300" width="2.200" height="4" fill="#4a4b4e" transform="rotate(337.5)"/><rect x="-1.100" y="-28.300" width="2.200" height="4" fill="#4a4b4e" transform="rotate(345.0)"/><rect x="-1.100" y="-28.300" width="2.200" height="4" fill="#4a4b4e" transform="rotate(352.5)"/><circle r="25.500" fill="#4a4b4e"/><circle r="22" fill="#909194"/><circle r="19" fill="#3f4043"/><circle r="16.500" fill="#737477"/><line x1="0" y1="0" x2="17.00" y2="0.00" stroke="#c2c3c6" stroke-width="2.800"/><line x1="0" y1="0" x2="-8.50" y2="14.72" stroke="#c2c3c6" stroke-width="2.800"/><line x1="0" y1="0" x2="-8.50" y2="-14.72" stroke="#c2c3c6" stroke-width="2.800"/><circle r="2.600" fill="#c2c3c6"/><circle r="1.100" fill="#4a4b4e"/></g></svg>
<div style="position:absolute;left:3788px;top:207.5px;width:30px;height:30px;border-radius:15px;background:#f23c34;"></div><span class="t" style="left:3797.62px;top:222.54px;font-size:19.5px;color:#fff;opacity:0.92;-webkit-text-stroke:0.22px #fff;">1</span>
<svg style="position:absolute;left:3742px;top:304px;overflow:visible" width="66" height="66" viewBox="0 0 66 66"><defs><linearGradient id="g3" x1="0" y1="0" x2="0" y2="1"><stop offset="0" stop-color="#22a6fc"/><stop offset="1" stop-color="#0a6ce4"/></linearGradient></defs><rect x="0" y="0" width="66" height="66" rx="15.5" fill="url(#g3)"/><path d="M21 23 L44 43 L33 52 L33 14 L44 23 L21 43" fill="none" stroke="#fff" stroke-width="3.6" stroke-linejoin="round" stroke-linecap="round"/></svg>
<svg style="position:absolute;left:3742px;top:390px;overflow:visible" width="66" height="66" viewBox="0 0 66 66"><rect x="0" y="0" width="66" height="66" rx="15.5" fill="#fff"/><g transform="translate(8.500,11.500) scale(0.56)"><path d="m6.600 66.850 3.850 6.650c.8 1.400 1.950 2.500 3.300 3.300l13.750-23.800h-27.500c0 1.550.4 3.100 1.200 4.500z" fill="#0066da"/><path d="m43.650 25-13.750-23.800c-1.350.8-2.500 1.900-3.300 3.300l-25.400 44a9.060 9.060 0 0 0 -1.200 4.500h27.500z" fill="#00ac47"/><path d="m73.550 76.800c1.350-.8 2.500-1.900 3.300-3.300l1.600-2.750 7.650-13.250c.8-1.400 1.200-2.950 1.200-4.500h-27.502l5.852 11.500z" fill="#ea4335"/><path d="m43.650 25 13.750-23.800c-1.350-.8-2.900-1.200-4.500-1.200h-18.500c-1.600 0-3.150.45-4.500 1.200z" fill="#00832d"/><path d="m59.800 53h-32.300l-13.750 23.800c1.350.8 2.900 1.200 4.500 1.200h50.800c1.600 0 3.150-.45 4.500-1.200z" fill="#2684fc"/><path d="m73.400 26.500-12.700-22c-.8-1.400-1.950-2.500-3.300-3.300l-13.750 23.800 16.150 28h27.450c0-1.550-.4-3.100-1.200-4.500z" fill="#ffba00"/></g></svg>
<svg style="position:absolute;left:3742px;top:476px;overflow:visible" width="66" height="70" viewBox="0 0 66 70"><g transform="translate(33.2,41)"><circle cx="0" cy="-33" r="5" fill="none" stroke="#221e1f" stroke-width="2.500"/><circle r="27" fill="#231f20"/><circle r="23.500" fill="#fff"/><path d="M0 0 L0 -23.500 A23.500 23.500 0 0 1 21.79 -8.80 Z" fill="#d9362c"/><line x1="0.00" y1="-20.00" x2="0.00" y2="-23.00" stroke="#333" stroke-width="1"/><line x1="7.65" y1="-18.48" x2="8.80" y2="-21.25" stroke="#333" stroke-width="1"/><line x1="14.14" y1="-14.14" x2="16.26" y2="-16.26" stroke="#333" stroke-width="1"/><line x1="18.48" y1="-7.65" x2="21.25" y2="-8.80" stroke="#333" stroke-width="1"/><line x1="20.00" y1="-0.00" x2="23.00" y2="-0.00" stroke="#333" stroke-width="1"/><line x1="18.48" y1="7.65" x2="21.25" y2="8.80" stroke="#333" stroke-width="1"/><line x1="14.14" y1="14.14" x2="16.26" y2="16.26" stroke="#333" stroke-width="1"/><line x1="7.65" y1="18.48" x2="8.80" y2="21.25" stroke="#333" stroke-width="1"/><line x1="0.00" y1="20.00" x2="0.00" y2="23.00" stroke="#333" stroke-width="1"/><line x1="-7.65" y1="18.48" x2="-8.80" y2="21.25" stroke="#333" stroke-width="1"/><line x1="-14.14" y1="14.14" x2="-16.26" y2="16.26" stroke="#333" stroke-width="1"/><line x1="-18.48" y1="7.65" x2="-21.25" y2="8.80" stroke="#333" stroke-width="1"/><line x1="-20.00" y1="0.00" x2="-23.00" y2="0.00" stroke="#333" stroke-width="1"/><line x1="-18.48" y1="-7.65" x2="-21.25" y2="-8.80" stroke="#333" stroke-width="1"/><line x1="-14.14" y1="-14.14" x2="-16.26" y2="-16.26" stroke="#333" stroke-width="1"/><line x1="-7.65" y1="-18.48" x2="-8.80" y2="-21.25" stroke="#333" stroke-width="1"/></g></svg>
<svg style="position:absolute;left:3738px;top:556px;overflow:visible" width="74" height="74" viewBox="0 0 74 74"><defs><radialGradient id="g6" cx="0.5" cy="0.3" r="0.75"><stop offset="0" stop-color="#3fc650"/><stop offset="0.7" stop-color="#1ea53a"/><stop offset="1" stop-color="#0b8a2c"/></radialGradient></defs><circle cx="37" cy="37" r="37" fill="#0a6a20"/><circle cx="37" cy="37" r="36" fill="url(#g6)"/><path d="M24.500 13 C25 8.500 28.500 6 33 6.300 L42.300 6.800 C37 10 36 14 36.800 18.500 C37.600 24 39.500 29 39 34.500 L32 34.500 C27 27 24 20 24.500 13 Z" fill="#f3fff4"/><path d="M41 12.500 L45.500 8.500 C50 10 53.500 15 54.300 20 L43.500 21.300 C43.800 18 42.800 15 41 12.500 Z" fill="#f3fff4"/><path d="M34.400 39 L45.500 41 C48 44.500 49 48 48.200 52 C47.300 58 45 63 42 66.500 L30 66.500 C34.500 62 37 57 36.800 51.500 C36.700 47 35.800 43 34.400 39 Z" fill="#f3fff4"/><path d="M17 30.500 L51.500 37.200 L55.600 40 L50.700 41.700 L16.200 35 Z" fill="#f3fff4" stroke="#138a30" stroke-width="1"/><path d="M34.500 33.800 L33.700 38.200" stroke="#138a30" stroke-width="1"/></svg>
<svg style="position:absolute;left:3742px;top:646px;overflow:visible" width="66" height="66" viewBox="0 0 66 66"><defs><linearGradient id="g7" x1="0" y1="0" x2="0" y2="1"><stop offset="0" stop-color="#1c7cf2"/><stop offset="1" stop-color="#45c3fb"/></linearGradient></defs><rect x="0" y="0" width="66" height="66" rx="15.5" fill="url(#g7)"/><defs><linearGradient id="g7b" x1="0" y1="0" x2="0" y2="1"><stop offset="0" stop-color="#ffffff"/><stop offset="1" stop-color="#dfe3ea"/></linearGradient></defs><rect x="9" y="18" width="48" height="31" rx="3.500" fill="url(#g7b)"/><path d="M10 20 L33 38 L56 20" fill="none" stroke="#b9bec8" stroke-width="1.8"/><path d="M10 47.500 L26 33 M56 47.500 L40 33" fill="none" stroke="#c6cad2" stroke-width="1.5"/></svg>
<div style="position:absolute;left:3788px;top:636px;width:30px;height:30px;border-radius:15px;background:#f23c34;"></div><span class="t" style="left:3797.62px;top:651.04px;font-size:19.5px;color:#fff;opacity:0.92;-webkit-text-stroke:0.22px #fff;">4</span>
<svg style="position:absolute;left:3742px;top:732px;overflow:visible" width="66" height="66" viewBox="0 0 66 66"><defs><linearGradient id="g8" x1="0" y1="0" x2="0" y2="1"><stop offset="0" stop-color="#575757"/><stop offset="1" stop-color="#404040"/></linearGradient></defs><rect x="0" y="0" width="66" height="66" rx="15.5" fill="url(#g8)"/><defs><linearGradient id="g8b" x1="0" y1="0" x2="0" y2="1"><stop offset="0" stop-color="#ffa21a"/><stop offset="1" stop-color="#f08c00"/></linearGradient></defs><path d="M15 20.400 L51 9.900 L51 22.900 L15 33.500 Z" fill="url(#g8b)"/><path d="M15 43.400 L51 31 L51 44.600 L15 56.400 Z" fill="url(#g8b)"/><path d="M15 20.400 L51 31 L51 44.600 L15 33.500 Z" fill="#f79d10"/><path d="M15 33.500 L51 44.600 L33 38.800 Z" fill="#d87c00" opacity=".3"/></svg>
<svg style="position:absolute;left:3742px;top:818px;overflow:visible" width="66" height="66" viewBox="0 0 66 66"><defs><linearGradient id="g9" x1="0" y1="0" x2="0" y2="1"><stop offset="0" stop-color="#ffffff"/><stop offset="1" stop-color="#ececee"/></linearGradient></defs><rect x="0" y="0" width="66" height="66" rx="15.5" fill="url(#g9)"/><path d="M21.40 39.10 L8.82 17.32 A28.5 28.5 0 0 1 58.15 19.00 L33.00 19.00 Z" fill="#ea4335"/><path d="M33.00 19.00 L58.15 19.00 A28.5 28.5 0 0 1 32.03 60.88 L44.60 39.10 Z" fill="#fbc116"/><path d="M44.60 39.10 L32.03 60.88 A28.5 28.5 0 0 1 8.82 17.32 L21.40 39.10 Z" fill="#34a853"/><circle cx="33" cy="32.4" r="13.700000000000001" fill="#fff"/><circle cx="33" cy="32.4" r="10.8" fill="#3b7df0"/></svg>
<svg style="position:absolute;left:3742px;top:904px;overflow:visible" width="66" height="66" viewBox="0 0 66 66"><defs><linearGradient id="g10" x1="0" y1="0" x2="0" y2="1"><stop offset="0" stop-color="#1a9be4"/><stop offset="1" stop-color="#0a78c8"/></linearGradient></defs><rect x="0" y="0" width="66" height="66" rx="15.5" fill="url(#g10)"/><defs><linearGradient id="g10b" x1="0" y1="0" x2="0" y2="1"><stop offset="0" stop-color="#ffffff"/><stop offset="1" stop-color="#dfe6ee"/></linearGradient></defs><rect x="11.500" y="12" width="43" height="42" rx="6" fill="url(#g10b)"/><rect x="19.500" y="19.500" width="10.500" height="25" rx="1.500" fill="#118bd8"/><rect x="36" y="19.500" width="10.500" height="15.500" rx="1.500" fill="#118bd8"/></svg>
<svg style="position:absolute;left:3742px;top:990px;overflow:visible" width="66" height="66" viewBox="0 0 66 66"><defs><linearGradient id="g11" x1="0" y1="0" x2="0" y2="1"><stop offset="0" stop-color="#c01508"/><stop offset="1" stop-color="#9f0a02"/></linearGradient></defs><rect x="0" y="0" width="66" height="66" rx="15.5" fill="url(#g11)"/><path d="M14 50 C17 44 26 38 33 36 C42 33 53 35 53 39 C53 43 44 41 37 36 C30 30 28 20 30.500 15.500 C33 12 35.500 16 34 23 C32 33 24 46 19 51 C16 54 12.500 53.500 14 50 Z" fill="none" stroke="#fff" stroke-width="3.200" stroke-linejoin="round"/></svg>
<svg style="position:absolute;left:3742px;top:1076px;overflow:visible" width="66" height="66" viewBox="0 0 66 66"><clipPath id="c12"><rect width="66" height="66" rx="15.5"/></clipPath><g clip-path="url(#c12)"><defs><linearGradient id="g12" x1="0" y1="0" x2="0" y2="1"><stop offset="0" stop-color="#ffe066"/><stop offset="1" stop-color="#f7c400"/></linearGradient></defs><rect width="66" height="66" fill="#f3f1ec"/><rect width="66" height="17" fill="url(#g12)"/><rect y="17" width="66" height="1.200" fill="#cfcabd"/><path d="M0 30 H66 M0 42 H66 M0 54 H66" stroke="#d9d6ce" stroke-width="1"/><path d="M4 21 H62" stroke="#c9c5ba" stroke-width="1" stroke-dasharray="1.5 2"/></g></svg>
<svg style="position:absolute;left:3742px;top:1162px;overflow:visible" width="66" height="66" viewBox="0 0 66 66"><rect x="0" y="0" width="66" height="66" rx="15.5" fill="#3b77f0"/><circle cx="33" cy="32.500" r="20.300" fill="#fff"/><circle cx="33" cy="32.500" r="24" fill="none" stroke="#fff" stroke-width="1.900" stroke-dasharray="6.200 2.200"/><path d="M15.500 46 L10.500 55.500 L22 52 Z" fill="#fff"/></svg>
<svg style="position:absolute;left:3742px;top:1246px;overflow:visible" width="66" height="66" viewBox="0 0 66 66"><defs><linearGradient id="g14" x1="0" y1="0" x2="0" y2="1"><stop offset="0" stop-color="#ececec"/><stop offset="1" stop-color="#c9c9c9"/></linearGradient></defs><rect x="0" y="0" width="66" height="66" rx="15.5" fill="url(#g14)"/><rect x="16" y="8.500" width="34" height="49" rx="5.500" fill="#2b2b2d"/><rect x="19.500" y="12.500" width="27" height="10" rx="1.500" fill="#545457"/><circle cx="23.0" cy="30.0" r="3.200" fill="#d0d0d0"/><circle cx="33.2" cy="30.0" r="3.200" fill="#d0d0d0"/><circle cx="43.4" cy="30.0" r="3.200" fill="#ff9f0a"/><circle cx="23.0" cy="40.3" r="3.200" fill="#d0d0d0"/><circle cx="33.2" cy="40.3" r="3.200" fill="#d0d0d0"/><circle cx="43.4" cy="40.3" r="3.200" fill="#ff9f0a"/><rect x="20" y="47.4" width="16.500" height="6.400" rx="3.200" fill="#d0d0d0"/><circle cx="43.4" cy="50.6" r="3.200" fill="#ff9f0a"/></svg>
<svg style="position:absolute;left:3742px;top:1332px;overflow:visible" width="66" height="66" viewBox="0 0 66 66"><defs><linearGradient id="g15" x1="0" y1="0" x2="0" y2="1"><stop offset="0" stop-color="#18b4f4"/><stop offset="1" stop-color="#0a74d0"/></linearGradient></defs><circle cx="20" cy="19" r="19" fill="url(#g15)"/><circle cx="46" cy="47" r="19" fill="url(#g15)"/><circle cx="33" cy="33" r="29" fill="url(#g15)"/><text x="33" y="50.500" text-anchor="middle" font-family="Liberation Sans, sans-serif" font-weight="700" font-size="50" fill="#fff">S</text></svg>
<svg style="position:absolute;left:3740px;top:1411px;overflow:visible" width="70" height="78" viewBox="0 0 70 78"><defs><linearGradient id="g16" x1="0" y1="0" x2="0" y2="1"><stop offset="0" stop-color="#2fae96"/><stop offset="1" stop-color="#27957f"/></linearGradient></defs><rect x="1" y="1" width="68" height="76" rx="8" fill="url(#g16)" stroke="#eef6f4" stroke-width="2.200"/><rect x="13" y="22" width="44" height="28" rx="1.500" fill="#f1fbf9"/><path d="M29 28 L29 44 L43 36 Z" fill="#2aa58c"/><rect x="26" y="53" width="18" height="3" rx="1" fill="#f1fbf9"/></svg>
<svg style="position:absolute;left:3742px;top:1504px;overflow:visible" width="66" height="66" viewBox="0 0 66 66"><defs><linearGradient id="g17" x1="0" y1="0" x2="0" y2="1"><stop offset="0" stop-color="#63e35f"/><stop offset="1" stop-color="#12b02a"/></linearGradient></defs><rect x="0" y="0" width="66" height="66" rx="15.5" fill="url(#g17)"/><rect x="12" y="43" width="8" height="13" rx="1" fill="#fff"/><rect x="23" y="31" width="8" height="25" rx="1" fill="#fff"/><rect x="34.500" y="9.500" width="8" height="46.500" rx="1" fill="#fff"/><rect x="46" y="22" width="8" height="34" rx="1" fill="#fff"/></svg>
<div style="position:absolute;left:3740px;top:1600px;width:76px;height:2.4px;background:#5c5c5c;"></div>
<svg style="position:absolute;left:3742px;top:1628px;overflow:visible" width="66" height="66" viewBox="0 0 66 66"><rect x="0" y="0" width="66" height="66" rx="15.5" fill="#fff"/><rect x="23.500" y="10" width="9" height="20" rx="4.500" fill="#36c5f0"/><rect x="10" y="23.500" width="22" height="9" rx="4.500" fill="#36c5f0"/><circle cx="27" cy="14" r="4.500" fill="#36c5f0"/><rect x="35" y="10" width="9" height="22" rx="4.500" fill="#2eb67d"/><rect x="47" y="22" width="9" height="9" rx="4.500" fill="#2eb67d"/><rect x="35" y="35" width="21" height="9" rx="4.500" fill="#ecb22e"/><rect x="35" y="47" width="9" height="9" rx="4.500" fill="#ecb22e"/><rect x="22.500" y="35" width="9" height="21" rx="4.500" fill="#e01e5a"/><rect x="10" y="35" width="9" height="9" rx="4.500" fill="#e01e5a"/></svg>
<div style="position:absolute;left:3788px;top:1618px;width:30px;height:30px;border-radius:15px;background:#f23c34;"></div><div style="position:absolute;left:3801.5px;top:1631.5px;width:3px;height:3px;border-radius:2px;background:#fff;"></div>
<svg style="position:absolute;left:3742px;top:1714px;overflow:visible" width="66" height="66" viewBox="0 0 66 66"><defs><linearGradient id="g19" x1="0" y1="0" x2="0" y2="1"><stop offset="0" stop-color="#1f7dff"/><stop offset="1" stop-color="#0b4fd8"/></linearGradient></defs><rect x="0" y="0" width="66" height="66" rx="15.5" fill="url(#g19)"/><text x="33" y="38.800" text-anchor="middle" font-family="Liberation Sans, sans-serif" font-weight="400" font-size="19.500" fill="#fff" stroke="#fff" stroke-width="0.550">zoom</text></svg>
<svg style="position:absolute;left:3741px;top:1800px;overflow:visible" width="68" height="68" viewBox="0 0 68 68"><rect x="0" y="0" width="66" height="66" rx="16" fill="#001e36"/><text x="13.800" y="46.200" textLength="41.500" lengthAdjust="spacingAndGlyphs" font-family="Liberation Sans, sans-serif" font-weight="700" font-size="40.500" fill="#31a8ff">Ps</text></svg>
<div style="position:absolute;left:3740px;top:1896px;width:76px;height:2.4px;background:#5c5c5c;"></div>
<svg style="position:absolute;left:3750px;top:1917px;overflow:visible" width="50" height="78" viewBox="0 0 50 78"><defs><linearGradient id="g21" x1="0" y1="0" x2="0" y2="1"><stop offset="0" stop-color="#fafafa"/><stop offset="1" stop-color="#ececec"/></linearGradient></defs><rect x="0" y="6" width="5" height="70" fill="#2c2c2c"/><rect x="2.500" y="3.500" width="4" height="73" fill="#8a8a8a"/><rect x="5" y="1" width="44" height="76" fill="url(#g21)"/><path d="M30 1 L49 1 L49 26 C44 27.500 36 27 31.500 26.500 C32.500 18 32 9 30 1 Z" fill="#fdfdfd" stroke="#d4d4d4" stroke-width="0.800"/><path d="M8.500 15 L11.500 9.500 L14.500 15 Z" fill="#d9605a"/><rect x="8" y="16" width="7" height="1.500" fill="#b36a66"/><path d="M7 24 H30 M7 27.500 H26 M7 30 H44 M7 32 H24" stroke="#8f8f8f" stroke-width="1"/><path d="M9 36 H15 M11 39 H21 M11 43 H25 M13 45.500 H33 M11 48 H24 M13 50.500 H30 M11 53 H26 M13 56 H37 M11 59 H21 M13 62 H27 M11 66 H24 M13 68.500 H32" stroke="#b0b0b0" stroke-width="0.900"/></svg>
<svg style="position:absolute;left:3745px;top:2003px;overflow:visible" width="60" height="78" viewBox="0 0 60 78"><defs><linearGradient id="g22" x1="0" y1="0" x2="0" y2="1"><stop offset="0" stop-color="#929292"/><stop offset="1" stop-color="#5a5a5a"/></linearGradient></defs><defs><linearGradient id="g22h" x1="0" y1="0" x2="1" y2="0"><stop offset="0" stop-color="#000" stop-opacity=".22"/><stop offset="0.45" stop-color="#fff" stop-opacity=".1"/><stop offset="1" stop-color="#000" stop-opacity=".25"/></linearGradient></defs><path d="M0.700 7 L9 71 Q9.800 76.500 16 76.500 L44 76.500 Q50.200 76.500 51 71 L59.300 7 Z" fill="url(#g22)" opacity=".93"/><path d="M0.700 7 L9 71 Q9.800 76.500 16 76.500 L44 76.500 Q50.200 76.500 51 71 L59.300 7 Z" fill="url(#g22h)"/><ellipse cx="30" cy="8" rx="29.300" ry="5.500" fill="#a2a2a2"/><ellipse cx="30" cy="8.800" rx="26" ry="4" fill="#4c4c4c"/><path d="M6 9 L9 3.500 L14 5 L19 1 L25 4.500 L30 0.500 L36 4 L41 1.500 L46 4 L52 3 L54.500 9 L47 13 L38 10.500 L30 13.500 L21 11 L12 13.500 Z" fill="#f1f1f1"/><path d="M16 6 L24 4 L27 10.500 L19 12.500 Z" fill="#7fb7c4"/><path d="M33 5 L41 4.500 L42 11 L34 12 Z" fill="#8f6d62"/><path d="M24 4 L30 2 L33 5 L30 9 Z" fill="#dcdcdc"/><path d="M42 5 L49 5 L50 9.500 L44 11 Z" fill="#cfcfcf"/></svg>
<div style="position:absolute;left:3817.75px;top:161.5px;width:8px;height:8px;border-radius:4px;background:#9b9b9b;"></div>
<div style="position:absolute;left:3817.75px;top:503.5px;width:8px;height:8px;border-radius:4px;background:#9b9b9b;"></div>
<div style="position:absolute;left:3817.75px;top:676px;width:8px;height:8px;border-radius:4px;background:#9b9b9b;"></div>
<div style="position:absolute;left:3817.75px;top:761.75px;width:8px;height:8px;border-radius:4px;background:#9b9b9b;"></div>
<div style="position:absolute;left:3817.75px;top:848px;width:8px;height:8px;border-radius:4px;background:#9b9b9b;"></div>
<div style="position:absolute;left:3817.75px;top:934px;width:8px;height:8px;border-radius:4px;background:#9b9b9b;"></div>
<div style="position:absolute;left:3817.75px;top:1106px;width:8px;height:8px;border-radius:4px;background:#9b9b9b;"></div>
<div style="position:absolute;left:3817.75px;top:1191.75px;width:8px;height:8px;border-radius:4px;background:#9b9b9b;"></div>
<div style="position:absolute;left:3817.75px;top:1362px;width:8px;height:8px;border-radius:4px;background:#9b9b9b;"></div>
<div style="position:absolute;left:3817.75px;top:1658px;width:8px;height:8px;border-radius:4px;background:#9b9b9b;"></div>
<div style="position:absolute;left:3817.75px;top:1744px;width:8px;height:8px;border-radius:4px;background:#9b9b9b;"></div>
<div style="position:absolute;left:3817.75px;top:1830px;width:8px;height:8px;border-radius:4px;background:#9b9b9b;"></div>
<div id="menubar" style="position:absolute;left:0;top:0;width:3840px;height:48px;background:#000;">
<svg style="position:absolute;left:41px;top:7px" width="26" height="31" viewBox="14.5 3.5 139 163"><path fill="#fff" d="M150.37 130.25c-2.45 5.66-5.35 10.87-8.71 15.66-4.58 6.53-8.33 11.05-11.22 13.56-4.48 4.12-9.28 6.23-14.42 6.35-3.69 0-8.14-1.05-13.32-3.18-5.197-2.12-9.973-3.17-14.34-3.17-4.58 0-9.492 1.05-14.746 3.17-5.262 2.13-9.501 3.24-12.742 3.35-4.929.21-9.842-1.96-14.746-6.52-3.13-2.73-7.045-7.41-11.735-14.04-5.032-7.08-9.169-15.29-12.41-24.65-3.471-10.11-5.211-19.9-5.211-29.378 0-10.857 2.346-20.221 7.045-28.068 3.693-6.303 8.606-11.275 14.755-14.925s12.793-5.51 19.948-5.629c3.915 0 9.049 1.211 15.429 3.591 6.362 2.388 10.447 3.599 12.238 3.599 1.339 0 5.877-1.416 13.57-4.239 7.275-2.618 13.415-3.702 18.445-3.275 13.63 1.1 23.87 6.473 30.68 16.153-12.19 7.386-18.22 17.731-18.1 31.002.11 10.337 3.86 18.939 11.23 25.769 3.34 3.17 7.07 5.62 11.22 7.36-.9 2.61-1.85 5.11-2.86 7.51zM119.11 7.24c0 8.102-2.96 15.667-8.86 22.669-7.12 8.324-15.732 13.134-25.071 12.375a25.222 25.222 0 0 1-.188-3.07c0-7.778 3.386-16.102 9.399-22.908 3.002-3.446 6.82-6.311 11.45-8.597 4.62-2.252 8.99-3.497 13.1-3.71.12 1.083.17 2.166.17 3.24z"/></svg>
<span class="t" style="left:108.75px;top:22.74px;font-size:26px;color:#fff;font-weight:700;letter-spacing:0.094px;-webkit-text-stroke:0.3px #fff;">ScriptE S</span>
<span class="t" style="left:269.50px;top:22.74px;font-size:26px;color:#fff;letter-spacing:-0.833px;-webkit-text-stroke:0.22px #fff;">File</span>
<span class="t" style="left:353.00px;top:22.74px;font-size:26px;color:#fff;letter-spacing:-0.083px;-webkit-text-stroke:0.22px #fff;">Edit</span>
<span class="t" style="left:441.00px;top:22.74px;font-size:26px;color:#fff;letter-spacing:0.700px;-webkit-text-stroke:0.22px #fff;">Script</span>
<span class="t" style="left:553.00px;top:22.74px;font-size:26px;color:#fff;letter-spacing:0.717px;-webkit-text-stroke:0.22px #fff;">Production</span>
<span class="t" style="left:726.50px;top:22.74px;font-size:26px;color:#fff;letter-spacing:0.333px;-webkit-text-stroke:0.22px #fff;">Shot</span>
<span class="t" style="left:825.00px;top:22.74px;font-size:26px;color:#fff;letter-spacing:0.333px;-webkit-text-stroke:0.22px #fff;">Reports</span>
<span class="t" style="left:961.00px;top:22.74px;font-size:26px;color:#fff;letter-spacing:0.450px;-webkit-text-stroke:0.22px #fff;">Window</span>
<span class="t" style="left:1098.60px;top:22.74px;font-size:26px;color:#fff;letter-spacing:0.300px;-webkit-text-stroke:0.22px #fff;">Help</span>
<svg style="position:absolute;left:2700px;top:0" width="900" height="48" viewBox="2700 0 900 48"><defs><linearGradient id="zmg" x1="0" y1="0" x2="0" y2="1"><stop offset="0" stop-color="#3b7bf6"/><stop offset="1" stop-color="#0b45d0"/></linearGradient></defs><rect x="2712" y="8.5" width="32" height="31" rx="12" fill="url(#zmg)"/><text x="2728" y="29.5" font-family="Liberation Sans, sans-serif" font-weight="400" font-size="18" fill="#fff" text-anchor="middle">zm</text><line x1="2800.00" y1="24.00" x2="2808.00" y2="24.00" stroke="#f2f2f2" stroke-width="6.2" stroke-linecap="butt"/><line x1="2797.66" y1="29.66" x2="2803.31" y2="35.31" stroke="#f2f2f2" stroke-width="6.2" stroke-linecap="butt"/><line x1="2792.00" y1="32.00" x2="2792.00" y2="40.00" stroke="#f2f2f2" stroke-width="6.2" stroke-linecap="butt"/><line x1="2786.34" y1="29.66" x2="2780.69" y2="35.31" stroke="#f2f2f2" stroke-width="6.2" stroke-linecap="butt"/><line x1="2784.00" y1="24.00" x2="2776.00" y2="24.00" stroke="#f2f2f2" stroke-width="6.2" stroke-linecap="butt"/><line x1="2786.34" y1="18.34" x2="2780.69" y2="12.69" stroke="#f2f2f2" stroke-width="6.2" stroke-linecap="butt"/><line x1="2792.00" y1="16.00" x2="2792.00" y2="8.00" stroke="#f2f2f2" stroke-width="6.2" stroke-linecap="butt"/><line x1="2797.66" y1="18.34" x2="2803.31" y2="12.69" stroke="#f2f2f2" stroke-width="6.2" stroke-linecap="butt"/><circle cx="2792" cy="24" r="6" fill="none" stroke="#f2f2f2" stroke-width="4.5"/><circle cx="2856" cy="24" r="14.6" fill="none" stroke="#f2f2f2" stroke-width="2.2"/><circle cx="2856" cy="24" r="7" fill="#e6e6e6"/><path d="M3067 20 C3066 11 3074 7.5 3082 8.5 C3091 7.5 3098 13 3097 22 C3098.5 31 3094 39.5 3084 39 C3074 40.5 3067.5 35 3067.5 28 C3066.5 25 3066.5 23 3067 20 Z" fill="#e4e4e4"/><path d="M3075.5 24.5 L3080.5 29.5 L3088.5 19.5" fill="none" stroke="#111" stroke-width="3.6" stroke-linecap="round" stroke-linejoin="round"/><path d="M3138.5 13.5 L3130 27 L3135 27 L3132.5 36.5 L3141.5 22.5 L3136.2 22.5 Z" fill="#f2f2f2"/><rect x="3147" y="11.5" width="54.5" height="25.5" rx="4.5" fill="none" stroke="#f2f2f2" stroke-width="2"/><path d="M3204.2 19.5 q3.2 4.5 0 9 z" fill="#f2f2f2"/><text x="3174" y="30" font-family="Liberation Sans, sans-serif" font-size="17" fill="#f2f2f2" text-anchor="middle">~</text><path d="M3316 17 L3331 30.8 L3323.5 37 L3323.5 10.6 L3331 16.8 L3316 30.6" fill="none" stroke="#f2f2f2" stroke-width="2.6" stroke-linejoin="round" stroke-linecap="round"/><path d="M3378.23 20.73 A22.3 22.3 0 0 1 3409.77 20.73" fill="none" stroke="#f2f2f2" stroke-width="5"/><path d="M3383.96 26.46 A14.2 14.2 0 0 1 3404.04 26.46" fill="none" stroke="#f2f2f2" stroke-width="5"/><path d="M3394 36.5 L3387.8 30.3 A8.8 8.8 0 0 1 3400.2 30.3 Z" fill="#f2f2f2"/><circle cx="3461.5" cy="23" r="9.3" fill="none" stroke="#f2f2f2" stroke-width="3"/><line x1="3468.3" y1="29.8" x2="3475" y2="36.5" stroke="#f2f2f2" stroke-width="3.4" stroke-linecap="round"/><rect x="3518" y="11.8" width="24.5" height="9.6" rx="4.8" fill="none" stroke="#f2f2f2" stroke-width="2.2"/><circle cx="3523.2" cy="16.6" r="3" fill="#f2f2f2"/><rect x="3517" y="25" width="26.5" height="11.5" rx="5.75" fill="#f2f2f2"/><circle cx="3537.6" cy="30.75" r="3.1" fill="#000"/></svg>
<span class="t" style="left:2909.50px;top:22.74px;font-size:26px;color:#f5f5f5;letter-spacing:0.531px;-webkit-text-stroke:0.22px #f5f5f5;">NY: 15:08</span>
<span class="t" style="left:3213.00px;top:24.47px;font-size:21px;color:#f5f5f5;letter-spacing:0.750px;-webkit-text-stroke:0.22px #f5f5f5;">100%</span>
<span class="t" style="left:3581.00px;top:22.74px;font-size:26px;color:#858585;letter-spacing:0.556px;-webkit-text-stroke:0.22px #858585;">Sun 27 Oct</span>
<span class="t" style="left:3734.50px;top:22.74px;font-size:26px;color:#858585;letter-spacing:0.625px;-webkit-text-stroke:0.22px #858585;">19:08</span>
</div>
</body></html>
